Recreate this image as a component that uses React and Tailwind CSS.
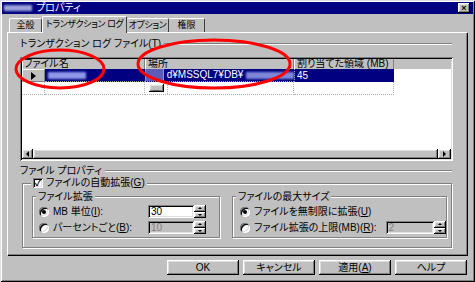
import React from 'react';

const raised =
  'shadow-[inset_-1px_-1px_#000,inset_1px_1px_#fff,inset_-2px_-2px_#808080,inset_2px_2px_#dfdfdf]';
const sunken =
  'shadow-[inset_1px_1px_#808080,inset_-1px_-1px_#fff,inset_2px_2px_#000,inset_-2px_-2px_#dfdfdf]';
const etchedBox = 'border border-[#808080] shadow-[1px_1px_0_#fff,inset_1px_1px_0_#fff]';

function EtchedLine() {
  return <div className="flex-1 h-[2px] border-t border-[#808080] border-b border-b-white" />;
}

function Radio({ checked }) {
  return (
    <span className="relative inline-block shrink-0 w-[10px] h-[10px] rounded-full bg-white shadow-[inset_1px_1px_#808080,inset_-1px_-1px_#fff,inset_2px_2px_#000,inset_-2px_-2px_#dfdfdf]">
      {checked && <span className="absolute left-[3px] top-[3px] w-[4px] h-[4px] rounded-full bg-black" />}
    </span>
  );
}

function Spinner() {
  return (
    <div className="flex flex-col w-[12px] h-[13px]">
      <div className={`flex-1 bg-[#c0c0c0] ${raised} flex items-center justify-center`}>
        <span className="w-0 h-0 border-x-[2px] border-x-transparent border-b-[2px] border-b-black" />
      </div>
      <div className={`flex-1 bg-[#c0c0c0] ${raised} flex items-center justify-center`}>
        <span className="w-0 h-0 border-x-[2px] border-x-transparent border-t-[2px] border-t-black" />
      </div>
    </div>
  );
}

function Field({ value, disabled, width }) {
  return (
    <div className={`h-[13px] ${width} ${sunken} ${disabled ? 'bg-[#c0c0c0] text-[#808080]' : 'bg-white text-black'} pl-[3px] flex items-center leading-none`}>
      {value}
    </div>
  );
}

function Button({ children }) {
  return (
    <div className={`w-[72px] h-[15px] bg-[#c0c0c0] ${raised} flex items-center justify-center leading-none`}>
      {children}
    </div>
  );
}

export default function App() {
  return (
    <div className="relative w-[475px] h-[282px] overflow-hidden bg-[#c0c0c0] p-[2px] text-[10px] text-black font-['Liberation_Sans','Noto_Sans_CJK_JP',sans-serif] [font-feature-settings:'palt'] shadow-[inset_1px_1px_#dfdfdf,inset_-1px_-1px_#000,inset_2px_2px_#fff,inset_-2px_-2px_#808080]">
      {/* title bar */}
      <div className="h-[12px] bg-[#000080] flex items-center pl-[2px] pr-[3px] text-white leading-none">
        <span className="w-[28px] h-[6px] bg-[#9aa2d8] blur-[1px]" />
        <span className="ml-[4px]">プロパティ</span>
        <div className={`ml-auto w-[12px] h-[10px] bg-[#c0c0c0] ${raised} flex items-center justify-center text-black text-[9px] font-bold leading-none`}>
          ×
        </div>
      </div>

      {/* tabs */}
      <div className="flex items-end h-[18px] ml-[7px] relative z-10 whitespace-nowrap text-[9px]">
        <div className="w-[33px] h-[14px] border-t border-l border-white border-r border-r-[#404040] rounded-t-[2px] flex items-center justify-center leading-none">
          全般
        </div>
        <div className="w-[85px] h-[17px] -mb-[1px] bg-[#c0c0c0] border-t border-l border-white border-r border-r-[#404040] rounded-t-[2px] flex items-center justify-center leading-none pb-[2px] tracking-[-0.4px]">
          トランザクション ログ
        </div>
        <div className="w-[42px] h-[14px] border-t border-white border-r border-r-[#404040] rounded-t-[2px] flex items-center justify-center leading-none tracking-[-0.4px]">
          オプション
        </div>
        <div className="w-[36px] h-[14px] border-t border-white border-r border-r-[#404040] rounded-t-[2px] flex items-center justify-center leading-none">
          権限
        </div>
      </div>

      {/* panel */}
      <div className="ml-[5px] w-[460px] h-[223px] border-t border-l border-white shadow-[inset_-1px_-1px_#808080,1px_1px_0_#000] flex flex-col pl-[12px] pt-[5px]">
        <div className="flex items-center h-[12px] w-[432px] leading-none">
          <span className="whitespace-nowrap">
            トランザクション ログ ファイル(<span className="underline">T</span>)
          </span>
          <span className="ml-[3px] flex-1 flex">
            <EtchedLine />
          </span>
        </div>

        {/* grid */}
        <div className={`mt-[7px] w-[433px] h-[104px] bg-white ${sunken} p-[2px] flex flex-col`}>
          <div className="flex h-[10px] bg-[#c0c0c0] leading-none">
            <div className="w-[123px] border-r border-[#808080] border-l border-l-white pl-[1px] flex items-center">ファイル名</div>
            <div className="w-[149px] border-r border-[#808080] border-l border-l-white pl-[2px] flex items-center">場所</div>
            <div className="w-[100px] border-r border-[#808080] border-l border-l-white pl-[2px] flex items-center">割り当てた領域 (MB)</div>
            <div className="flex-1" />
          </div>
          <div className="flex h-[13px] leading-none">
            <div className="w-[23px] bg-[#c0c0c0] border-l border-t border-white border-r border-r-[#808080] border-b border-b-[#808080] flex items-center justify-center">
              <span className="w-0 h-0 border-y-[4px] border-y-transparent border-l-[5px] border-l-black" />
            </div>
            <div className="w-[100px] bg-[#000080] border-b border-dotted border-[#a0a0a0] flex items-center pl-[3px]">
              <span className="w-[38px] h-[7px] bg-[#8e98e8] blur-[1px]" />
            </div>
            <div className="w-[149px] bg-[#000080] border-b border-dotted border-[#a0a0a0] flex items-center text-white">
              <div className="w-[23px] h-full bg-[#5c5cb8] border-x border-[#9090d0]" />
              <span className="ml-[3px]">d¥MSSQL7¥DB¥</span>
              <span className="ml-[3px] w-[60px] h-[7px] bg-[#7e88d8] blur-[1px]" />
            </div>
            <div className="w-[100px] bg-[#000080] border-l border-dotted border-[#a0a0a0] text-white flex items-center pl-[2px]">45</div>
            <div className="flex-1" />
          </div>
          <div className="flex h-[13px] leading-none">
            <div className="w-[23px] border-r border-b border-dotted border-[#b0b0b0]" />
            <div className="w-[100px] border-r border-b border-dotted border-[#b0b0b0]" />
            <div className="w-[149px] border-r border-b border-dotted border-[#b0b0b0] flex items-center">
              <div className="w-[23px] h-full border-r border-dotted border-[#b0b0b0] flex items-center justify-center">
                <div className={`w-[15px] h-[8px] bg-[#c0c0c0] ${raised} flex items-end justify-center text-[7px] leading-[6px]`}>...</div>
              </div>
            </div>
            <div className="w-[100px] border-r border-b border-dotted border-[#b0b0b0]" />
            <div className="flex-1" />
          </div>
          <div className="flex-1" />
          <div className="flex h-[10px] bg-[#c0c0c0]">
            <div className={`w-[11px] ${raised} flex items-center justify-center`}>
              <span className="w-0 h-0 border-y-[3px] border-y-transparent border-r-[3px] border-r-black" />
            </div>
            <div className={`flex-1 ${raised}`} />
            <div className={`w-[13px] ${raised} flex items-center justify-center`}>
              <span className="w-0 h-0 border-y-[3px] border-y-transparent border-l-[3px] border-l-black" />
            </div>
          </div>
        </div>

        <div className="mt-[4px] flex items-center h-[12px] w-[432px] leading-none">
          <span>ファイル プロパティ</span>
          <span className="ml-[3px] flex-1 flex">
            <EtchedLine />
          </span>
        </div>

        {/* group box */}
        <div className={`mt-[6px] ml-[2px] w-[430px] h-[65px] ${etchedBox} flex flex-col`}>
          <div className="-mt-[7px] ml-[8px] self-start bg-[#c0c0c0] px-[2px] h-[12px] flex items-center leading-none">
            <span className={`w-[10px] h-[10px] bg-white ${sunken} flex items-center justify-center text-[9px] font-bold leading-none`}>✓</span>
            <span className="ml-[3px]">ファイルの自動拡張(<span className="underline">G</span>)</span>
          </div>
          <div className="flex gap-[12px] ml-[9px] mt-[7px]">
            <div className={`w-[188px] h-[42px] ${etchedBox} flex flex-col`}>
              <div className="-mt-[6px] ml-[3px] self-start bg-[#c0c0c0] px-[2px] h-[12px] flex items-center leading-none">ファイル拡張</div>
              <div className="flex items-center h-[15px] mt-[1px] pl-[6px] leading-none">
                <Radio checked />
                <span className="ml-[4px] w-[95px]">MB 単位(<span className="underline">I</span>):</span>
                <Field value="30" width="w-[46px]" />
                <Spinner />
              </div>
              <div className="flex items-center h-[15px] mt-[1px] pl-[6px] leading-none">
                <Radio />
                <span className="ml-[4px] w-[95px]">パーセントごと(<span className="underline">B</span>):</span>
                <Field value="10" disabled width="w-[46px]" />
                <Spinner />
              </div>
            </div>
            <div className={`w-[215px] h-[42px] ${etchedBox} flex flex-col`}>
              <div className="-mt-[6px] ml-[3px] self-start bg-[#c0c0c0] px-[2px] h-[12px] flex items-center leading-none">ファイルの最大サイズ</div>
              <div className="flex items-center h-[15px] mt-[1px] pl-[7px] leading-none">
                <Radio checked />
                <span className="ml-[4px]">ファイルを無制限に拡張(<span className="underline">U</span>)</span>
              </div>
              <div className="flex items-center h-[15px] mt-[1px] pl-[7px] leading-none">
                <Radio />
                <span className="ml-[4px] w-[133px]">ファイル拡張の上限(MB)(<span className="underline">R</span>):</span>
                <Field value="2" disabled width="w-[49px]" />
                <Spinner />
              </div>
            </div>
          </div>
        </div>
      </div>

      {/* buttons */}
      <div className="mt-[5px] ml-[165px] flex gap-[4px]">
        <Button>OK</Button>
        <Button>キャンセル</Button>
        <Button>適用(<span className="underline">A</span>)</Button>
        <Button>ヘルプ</Button>
      </div>

      {/* red annotation ellipses */}
      <svg className="absolute left-0 top-0 pointer-events-none" width="475" height="282">
        <ellipse cx="60" cy="69" rx="44" ry="19" fill="none" stroke="#ff0000" strokeWidth="3" />
        <ellipse cx="214" cy="64" rx="76" ry="24" fill="none" stroke="#ff0000" strokeWidth="3" />
      </svg>
    </div>
  );
}
